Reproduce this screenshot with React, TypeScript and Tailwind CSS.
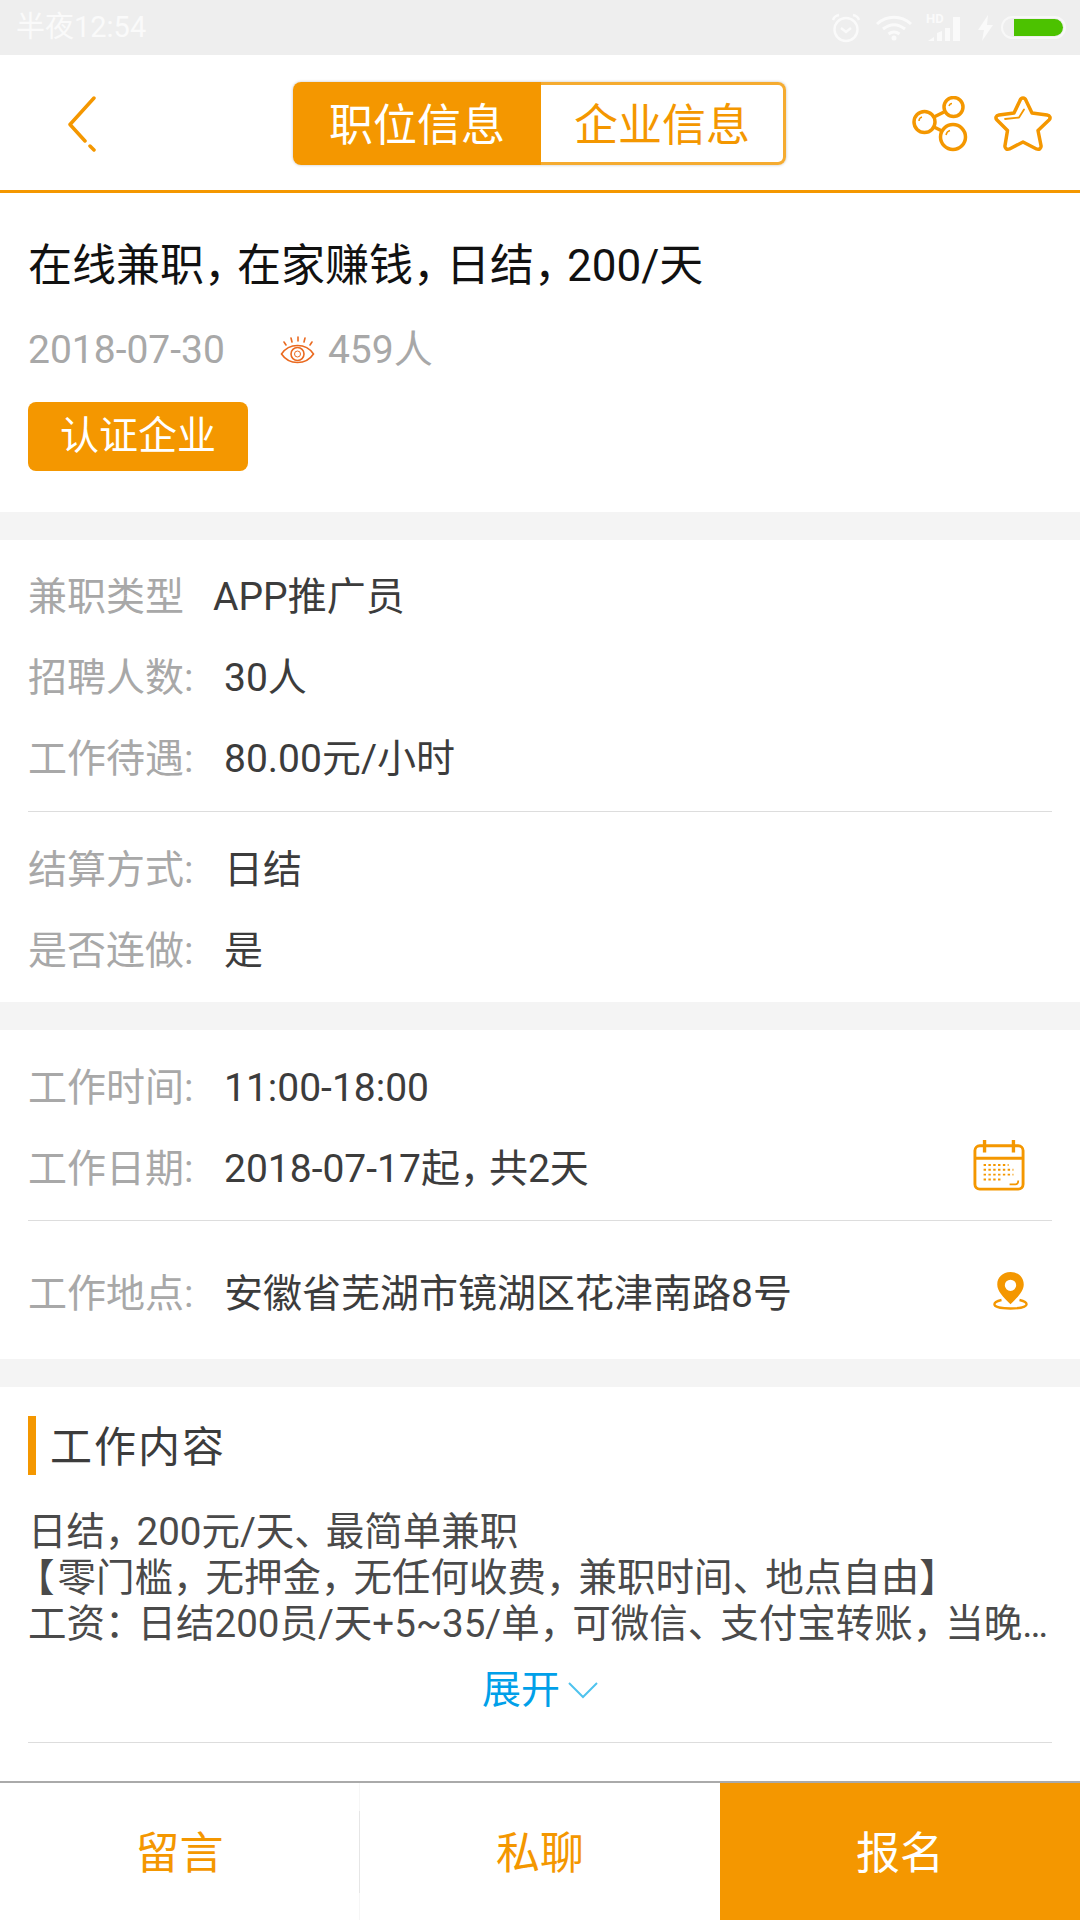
import type { ReactNode } from 'react';

const fontStack = 'font-["Roboto","Noto_Sans_CJK_SC",sans-serif]';

// full-width punctuation sits tighter in the reference than in Noto
function tight(text: string, squeeze = 'tracking-[-10px]') {
  return text.split(/([，、：])/).map((part, i) =>
    /[，、：]/.test(part) ? (
      <span key={i} className={squeeze}>{part}</span>
    ) : (
      part
    ),
  );
}

function Row({ label, children, right, height = 'h-[81px]' }: { label: string; children: ReactNode; right?: ReactNode; height?: string }) {
  return (
    <div className={`flex items-center text-[39px] ${height}`}>
      <span className="text-[#a8a8a8] w-[196px] shrink-0">{label}</span>
      <span className="text-[#3c3c3c]">{children}</span>
      {right && <div className="ml-auto flex items-center">{right}</div>}
    </div>
  );
}

function StatusIcons() {
  return (
    <div className="flex items-center ml-auto pr-[14px]">
      <svg width="30" height="30" viewBox="0 0 30 30" fill="none" stroke="#fafafa" strokeWidth="2.400">
        <circle cx="15" cy="16.500" r="11.500" />
        <path d="M10 15l5 4 5-4" />
        <path d="M2 7c1-3 3-4.500 6-5M28 7c-1-3-3-4.500-6-5" />
      </svg>
      <svg className="ml-[15px]" width="36" height="26" viewBox="0 0 36 26" fill="none" stroke="#fafafa" strokeWidth="3">
        <path d="M1 9c10-9 24-9 34 0M7 14c7-5.500 15-5.500 22 0M12.500 19c3.500-2.500 7.500-2.500 11 0" />
        <circle cx="18" cy="23" r="2.500" fill="#fafafa" stroke="none" />
      </svg>
      <div className="relative ml-[14px] w-[36px] h-[28px]">
        <span className="absolute left-0 -top-[2px] text-[13px] leading-[13px] font-bold text-[#fafafa]">HD</span>
        <svg className="absolute left-0 top-0" width="36" height="28" viewBox="0 0 36 28" fill="#fafafa">
          <path d="M2 27l6-4v4zM11 27v-8l5-2v10zM19 27V14h5v13zM27 27V3h7v24z" />
        </svg>
      </div>
      <svg className="ml-[16px]" width="15" height="26" viewBox="0 0 15 26" fill="#fafafa">
        <path d="M10 0L0 15h6l-2 11 11-16H9z" />
      </svg>
      <div className="ml-[8px] w-[65px] h-[23px] rounded-full border-2 border-[#f8f8f8] flex justify-end items-center pr-[1px]">
        <div className="w-[49px] h-[17px] bg-[#4cc200] rounded-r-full" />
      </div>
    </div>
  );
}

export default function App() {
  return (
    <div className={`w-[1080px] h-[1920px] flex flex-col overflow-hidden bg-white ${fontStack}`}>
      {/* status bar */}
      <div className="h-[55px] shrink-0 bg-[#eeeeee] flex items-center pl-[16px]">
        <span className="text-[29px] text-[#fafafa]">半夜12:54</span>
        <StatusIcons />
      </div>

      {/* header */}
      <div className="h-[138px] shrink-0 border-b-[3px] border-[#f49700] flex items-center pl-[68px]">
        <svg className="mt-[4px]" width="28" height="58" viewBox="0 0 28 58" fill="none" stroke="#f49700" strokeWidth="3.500" strokeLinecap="round" strokeLinejoin="round">
          <path d="M26 2L2 28.500 17 45" />
          <path d="M22 50l4 4" />
        </svg>
        <div className="mt-[2px] ml-[197px] flex h-[83px] w-[493px] rounded-[8px] shadow-[0_0_3px_rgba(0,0,0,0.25)]">
          <div className="w-[248px] rounded-l-[8px] bg-[#f49700] text-white text-[44px] pt-[4px] flex items-center justify-center">职位信息</div>
          <div className="flex-1 rounded-r-[8px] border-[3px] border-l-0 border-[#f5ab30] bg-white text-[#f49700] text-[44px] pt-[4px] flex items-center justify-center">企业信息</div>
        </div>
        <svg className="mt-[2px] ml-[126px]" width="56" height="56" viewBox="0 0 56 56" fill="none" stroke="#f49700" strokeWidth="3.500">
          <circle cx="12.500" cy="26" r="10.500" />
          <circle cx="41.500" cy="11" r="9.500" />
          <circle cx="41" cy="41" r="12.500" />
          <path d="M22 21l10-5M22 31l8 4" />
          <path d="M7 25c0-2 1-3.500 3-4M37 10c.5-1.500 1.500-2.500 3-2.500M34 39c.5-2.500 2-4 4-4.500" strokeWidth="1.500" />
        </svg>
        <svg className="mt-[2px] ml-[26px]" width="58" height="56" viewBox="0 0 58 56" fill="none" stroke="#f49700" strokeWidth="3.500" strokeLinejoin="round">
          <path d="M29 2c1.500 0 2.500 1 3 2.500l6 12.500 15 2c3 .5 4 3 2 5L44 34.500l3 15c.5 3-2 4.500-4.500 3.500L29 46l-13.500 7c-2.500 1-5-.5-4.500-3.500l2.500-15L3 24c-2-2-1-4.500 2-5l15-2 6-12.500c.5-1.500 1.500-2.500 3-2.500z" />
          <path d="M11 23l14-1.500 5-8" strokeWidth="1.800" strokeLinecap="round" />
        </svg>
      </div>

      <div className="flex-1 min-h-0 overflow-hidden">
        {/* title block */}
        <div className="px-[28px] pt-[43px] pb-[41px]">
          <h1 className="text-[44px] leading-[60px] text-[#111111] whitespace-nowrap">{tight('在线兼职，在家赚钱，日结，200/天', 'tracking-[-11px]')}</h1>
          <div className="mt-[29px] h-[50px] flex items-center text-[39px] text-[#a8a8a8]">
            <span>2018-07-30</span>
            <svg className="ml-[55px]" width="35" height="28" viewBox="0 0 35 28" fill="none" stroke="#ea6a20" strokeWidth="1.600">
              <path d="M1.500 18c4-6 9-8.500 16-8.500S29.500 12 33.500 18c-4 6-9 8.500-16 8.500S5.500 24 1.500 18z" />
              <circle cx="17.500" cy="18" r="6.500" />
              <circle cx="17.500" cy="18" r="3" strokeWidth="1" />
              <path d="M4 6l2 3M11 2l1 4M18 1v4M25 2l-1 4M32 6l-2 3" strokeLinecap="round" />
            </svg>
            <span className="ml-[13px]">459人</span>
          </div>
          <div className="mt-[27px] w-[220px] h-[69px] rounded-[8px] bg-[#f49700] text-white text-[39px] flex items-center justify-center">认证企业</div>
        </div>

        <div className="h-[28px] bg-[#f4f4f4]" />

        {/* job info */}
        <div className="px-[28px] pt-[17px] pb-[10px]">
          <div className="flex items-center h-[81px] text-[39px]">
            <span className="text-[#a8a8a8] w-[185px] shrink-0">兼职类型</span>
            <span className="text-[#3c3c3c]">APP推广员</span>
          </div>
          <Row label="招聘人数:">30人</Row>
          <Row label="工作待遇:">80.00元/小时</Row>
          <div className="h-px bg-[#dddddd] mt-[11px] mb-[18px]" />
          <Row label="结算方式:">日结</Row>
          <Row label="是否连做:">是</Row>
        </div>

        <div className="h-[28px] bg-[#f4f4f4]" />

        {/* time and place */}
        <div className="px-[28px] pt-[18px]">
          <Row label="工作时间:">11:00-18:00</Row>
          <Row
            label="工作日期:"
            right={
              <svg className="mr-[27px] mb-[9px]" width="52" height="52" viewBox="0 0 54 54" fill="none" stroke="#f49700" strokeWidth="3">
                <rect x="2" y="7" width="50" height="45" rx="5" />
                <path d="M2 20h50" />
                <path d="M12 1v13M42 1v13" strokeWidth="3.500" />
                <path d="M11 27h26M11 32h31M11 37h31M11 42h20" strokeWidth="2" strokeDasharray="2.500 2.500" />
                <path d="M38 47h6c2 0 3-1.500 3-4" strokeWidth="1.800" />
              </svg>
            }
          >
            {tight('2018-07-17起，共2天')}
          </Row>
          <div className="h-px bg-[#dddddd] mt-[10px]" />
          <Row
            label="工作地点:"
            height="h-[138px] pt-[8px]"
            right={
              <svg className="mr-[24px] mb-[6px]" width="35" height="38" viewBox="0 0 37 40" fill="none">
                <path fillRule="evenodd" d="M18.500 0C10 0 4.500 6 4.500 13c0 7 6 13 14 21 8-8 14-14 14-21C32.500 6 27 0 18.500 0zm0 8a6 6 0 110 12 6 6 0 010-12z" fill="#f49700" />
                <path d="M9 29.500C4 30.500 1.500 32 1.500 34c0 2.800 7.500 4.500 17 4.500s17-1.700 17-4.500c0-2-2.500-3.500-7.500-4.500" stroke="#f49700" strokeWidth="2.500" />
              </svg>
            }
          >
            安徽省芜湖市镜湖区花津南路8号
          </Row>
        </div>

        <div className="h-[28px] bg-[#f4f4f4]" />

        {/* job description */}
        <div className="px-[28px] pt-[29px]">
          <div className="flex items-center h-[59px]">
            <div className="w-[8px] h-[59px] bg-[#f49700]" />
            <span className="ml-[14px] pt-[3px] text-[42px] text-[#3c3c3c] tracking-[2px]">工作内容</span>
          </div>
          <div className="mt-[34px] text-[38.500px] leading-[46px] text-[#4a4a4a] [text-spacing-trim:space-all]">
            <p className="whitespace-nowrap">{tight('日结，200元/天、最简单兼职', 'tracking-[-7px]')}</p>
            <p className="whitespace-nowrap">
              <span className="ml-[-12px] tracking-[3px]">【</span>
              {tight('零门槛，无押金，无任何收费，兼职时间、地点自由】', 'tracking-[-6px]')}
            </p>
            <p className="whitespace-nowrap">{tight('工资：日结200员/天+5~35/单，可微信、支付宝转账，当晚…', 'tracking-[-6px]')}</p>
          </div>
          <div className="mt-[13px] h-[60px] flex items-center justify-center text-[39px] text-[#00a0e9]">
            展开
            <svg className="ml-[8px]" width="30" height="18" viewBox="0 0 30 18" fill="none" stroke="#4fc3ee" strokeWidth="2">
              <path d="M1 2l14 14L29 2" />
            </svg>
          </div>
          <div className="h-px bg-[#dddddd] mt-[22px]" />
        </div>
      </div>

      {/* bottom actions */}
      <div className="h-[139px] shrink-0 border-t-2 border-[#aaaaaa] flex text-[44px]">
        <div className="relative w-[360px] pt-[4px] flex items-center justify-center text-[#f49700] border-r border-[#f6f6f6]">
          留言
          <span className="absolute right-[-1px] top-[28px] h-[82px] w-px bg-[#e6e6e6]" />
        </div>
        <div className="w-[360px] pt-[4px] flex items-center justify-center text-[#f49700]">私聊</div>
        <div className="w-[360px] pt-[4px] flex items-center justify-center bg-[#f49700] text-white">报名</div>
      </div>
    </div>
  );
}
